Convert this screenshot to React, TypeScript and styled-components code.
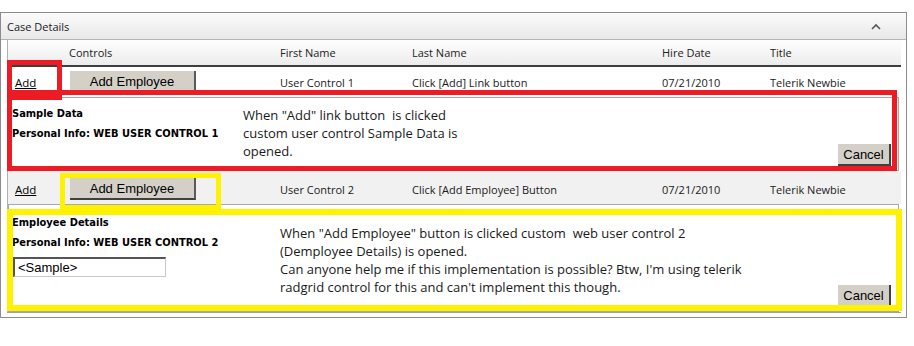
import React from "react";
import styled, { createGlobalStyle } from "styled-components";

const GlobalStyle = createGlobalStyle`
  html, body {
    margin: 0;
    padding: 0;
    background: #fff;
  }
  body {
    font-family: "Open Sans", "Noto Sans", sans-serif;
    color: #111;
  }
`;

const COLUMNS = "54px 211px 132px 250px 108px 1fr";

const rows = [
  {
    first: "User Control 1",
    last: "Click [Add] Link button",
    hired: "07/21/2010",
    title: "Telerik Newbie",
  },
  {
    first: "User Control 2",
    last: "Click [Add Employee] Button",
    hired: "07/21/2010",
    title: "Telerik Newbie",
  },
];

const Chevron = () => (
  <svg width="10" height="7" viewBox="0 0 10 7">
    <path d="M1 6 L5 2 L9 6" fill="none" stroke="#555" strokeWidth="1.6" />
  </svg>
);

const App = () => {
  return (
    <Page>
      <GlobalStyle />
      <Panel>
        <PanelHeader>
          <span>Case Details</span>
          <Chevron />
        </PanelHeader>
        <PanelBody>
          <Grid>
            <HeaderRow>
              <span />
              <span>Controls</span>
              <span>First Name</span>
              <span>Last Name</span>
              <span>Hire Date</span>
              <span>Title</span>
            </HeaderRow>

            <Row $height={30}>
              <LinkCell href="#">Add</LinkCell>
              <Cell>
                <GridButton>Add Employee</GridButton>
              </Cell>
              <Cell>{rows[0].first}</Cell>
              <Cell>{rows[0].last}</Cell>
              <Cell>{rows[0].hired}</Cell>
              <Cell>{rows[0].title}</Cell>
            </Row>
            <DetailPanel $height={74}>
              <DetailLeft $width={231} $top={6}>
                <DetailLabel>Sample Data</DetailLabel>
                <DetailLabel>Personal Info: WEB USER CONTROL 1</DetailLabel>
              </DetailLeft>
              <Description $top={8}>
                When "Add" link button&nbsp; is clicked
                <br />
                custom user control Sample Data is
                <br />
                opened.
              </Description>
              <CancelButton>Cancel</CancelButton>
            </DetailPanel>

            <Row $height={33} $alt $pad={3}>
              <LinkCell href="#">Add</LinkCell>
              <Cell>
                <GridButton>Add Employee</GridButton>
              </Cell>
              <Cell>{rows[1].first}</Cell>
              <Cell>{rows[1].last}</Cell>
              <Cell>{rows[1].hired}</Cell>
              <Cell>{rows[1].title}</Cell>
            </Row>
            <DetailPanel $height={108}>
              <DetailLeft $width={268} $top={8}>
                <DetailLabel>Employee Details</DetailLabel>
                <DetailLabel>Personal Info: WEB USER CONTROL 2</DetailLabel>
                <SampleInput defaultValue="<Sample>" />
              </DetailLeft>
              <Description $top={19}>
                When "Add Employee" button is clicked custom&nbsp; web user control 2
                <br />
                (Demployee Details) is opened.
                <br />
                Can anyone help me if this implementation is possible? Btw, I'm using telerik
                <br />
                radgrid control for this and can't implement this though.
              </Description>
              <CancelButton>Cancel</CancelButton>
            </DetailPanel>
          </Grid>
        </PanelBody>
      </Panel>

      <Annotation $color="#ed1c24" $left={7} $top={60} $width={55} $height={40} />
      <Annotation $color="#ed1c24" $left={7} $top={90} $width={890} $height={81} />
      <Annotation $color="#fff200" $left={60} $top={173} $width={161} $height={37} />
      <Annotation $color="#fff200" $left={7} $top={209} $width={895} $height={102} $thick={6} />
    </Page>
  );
};

export default App;

const Page = styled.div`
  position: relative;
  width: 914px;
  height: 346px;
  padding-top: 12px;
  box-sizing: border-box;
`;

const Panel = styled.section`
  width: 907px;
  box-sizing: border-box;
  border: 1px solid #8c8c8c;
`;

const PanelHeader = styled.div`
  height: 26px;
  display: flex;
  align-items: center;
  justify-content: space-between;
  padding: 0 25px 0 6px;
  background: linear-gradient(#fbfbfb, #e8e8e8);
  border-bottom: 1px solid #b4b4b4;
  font-size: 11px;
  color: #1a1a1a;
`;

const PanelBody = styled.div`
  padding: 0 5px 4px 6px;
`;

const Grid = styled.div`
  border-left: 1px solid #b0b0b0;
  border-bottom: 1px solid #a0a0a0;
`;

const HeaderRow = styled.div`
  display: grid;
  grid-template-columns: ${COLUMNS};
  align-items: center;
  height: 27px;
  box-sizing: border-box;
  background: linear-gradient(#fefefe, #ececec);
  border-bottom: 2px solid #3e3e3e;
  font-size: 11px;
  color: #222;

  & > span {
    padding-left: 7px;
  }
`;

const Row = styled.div<{ $height: number; $alt?: boolean; $pad?: number }>`
  display: grid;
  grid-template-columns: ${COLUMNS};
  align-items: center;
  height: ${({ $height }) => $height}px;
  box-sizing: border-box;
  padding-top: ${({ $pad }) => $pad || 0}px;
  background: ${({ $alt }) => ($alt ? "#f1f1f1" : "#fff")};
  font-size: 11px;
  color: #1a1a1a;
`;

const Cell = styled.div`
  padding-left: 7px;
  white-space: nowrap;
`;

const LinkCell = styled.a`
  padding-left: 7px;
  color: #000;
  font-size: 11.5px;
  text-decoration: underline;
`;

const GridButton = styled.button`
  width: 126px;
  height: 22px;
  margin-left: 1px;
  padding: 0;
  background: #d4d0c8;
  border: none;
  border-right: 2px solid #5a5a5a;
  border-bottom: 2px solid #404040;
  font-family: "Liberation Sans", Arial, sans-serif;
  font-size: 13px;
  color: #000;
`;

const DetailPanel = styled.div<{ $height: number }>`
  display: flex;
  align-items: flex-start;
  height: ${({ $height }) => $height}px;
  box-sizing: border-box;
  margin-right: 2px;
  padding: 0 7px 4px 3px;
  background: #fff;
  border: 1px solid #a8a8a8;
`;

const DetailLeft = styled.div<{ $width: number; $top: number }>`
  display: flex;
  flex-direction: column;
  width: ${({ $width }) => $width}px;
  flex-shrink: 0;
  padding-top: ${({ $top }) => $top}px;
`;

const DetailLabel = styled.div`
  height: 20px;
  line-height: 20px;
  font-family: "DejaVu Sans Condensed", "DejaVu Sans", sans-serif;
  font-weight: bold;
  font-size: 11px;
  color: #000;
  white-space: nowrap;
`;

const SampleInput = styled.input`
  width: 153px;
  height: 20px;
  margin: 4px 0 0 1px;
  padding: 0 3px;
  box-sizing: border-box;
  border: none;
  border-top: 2px solid #555;
  border-left: 2px solid #555;
  border-right: 1px solid #c8c8c8;
  border-bottom: 1px solid #c8c8c8;
  font-family: "Liberation Sans", Arial, sans-serif;
  font-size: 13px;
  color: #000;
`;

const Description = styled.p<{ $top: number }>`
  margin: 0;
  padding-top: ${({ $top }) => $top}px;
  font-size: 13px;
  line-height: 18px;
  color: #1a1a1a;
  white-space: nowrap;
`;

const CancelButton = styled.button`
  align-self: flex-end;
  margin-left: auto;
  width: 53px;
  height: 22px;
  padding: 0;
  background: #d4d0c8;
  border: none;
  border-right: 2px solid #404040;
  border-bottom: 2px solid #404040;
  font-family: "Liberation Sans", Arial, sans-serif;
  font-size: 13px;
  color: #000;
`;

const Annotation = styled.div<{
  $color: string;
  $left: number;
  $top: number;
  $width: number;
  $height: number;
  $thick?: number;
}>`
  position: absolute;
  left: ${({ $left }) => $left}px;
  top: ${({ $top }) => $top}px;
  width: ${({ $width }) => $width}px;
  height: ${({ $height }) => $height}px;
  box-sizing: border-box;
  border: ${({ $thick }) => $thick || 5}px solid ${({ $color }) => $color};
  pointer-events: none;
`;
